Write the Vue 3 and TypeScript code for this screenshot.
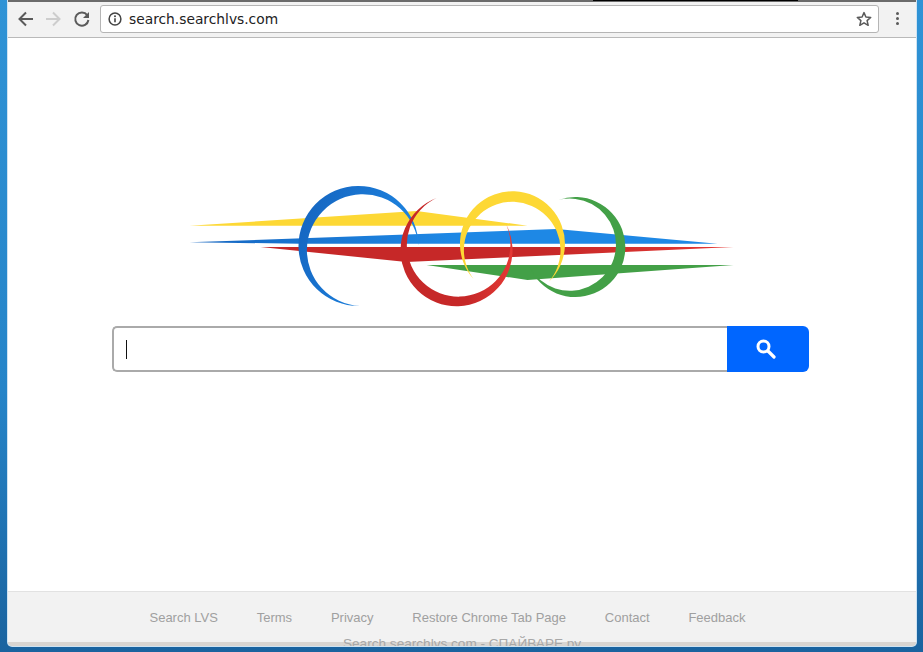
<script setup lang="ts">
const footerLinks: string[] = ['Search LVS', 'Terms', 'Privacy', 'Restore Chrome Tab Page', 'Contact', 'Feedback']
</script>

<template>
  <div class="desktop">
    <div class="window">
      <div class="topstrip"><span class="tabedge"></span></div>
      <header class="toolbar">
        <svg class="tool" width="18" height="18" viewBox="0 0 18 18">
          <path d="M16 9H3M9 2.500 2.500 9 9 15.500" fill="none" stroke="#5a5a5a" stroke-width="2" />
        </svg>
        <svg class="tool forward" width="18" height="18" viewBox="0 0 18 18">
          <path d="M2 9h13M9 2.500 15.500 9 9 15.500" fill="none" stroke="#cdcdcd" stroke-width="2" />
        </svg>
        <svg class="tool reload" width="18" height="18" viewBox="0 0 18 18">
          <path d="M14.200 5.200A6.600 6.600 0 1 0 15.400 10" fill="none" stroke="#5a5a5a" stroke-width="2" />
          <path d="M16 2v6h-6z" fill="#5a5a5a" />
        </svg>
        <div class="omnibox">
          <svg width="14" height="14" viewBox="0 0 14 14">
            <circle cx="7" cy="7" r="5.900" fill="none" stroke="#444" stroke-width="1.500" />
            <path d="M7 6.200v4" stroke="#444" stroke-width="1.600" />
            <circle cx="7" cy="4.200" r="1" fill="#444" />
          </svg>
          <span class="url">search.searchlvs.com</span>
          <svg class="star" width="16" height="16" viewBox="0 0 16 16">
            <path d="M8 1.600 9.900 6l4.800.4-3.600 3.200 1.100 4.700L8 11.800l-4.200 2.500 1.100-4.700-3.600-3.200L6.100 6z" fill="none" stroke="#5a5a5a" stroke-width="1.500" stroke-linejoin="round" />
          </svg>
        </div>
        <div class="menu"><i></i><i></i><i></i></div>
      </header>

      <main class="page">
        <svg class="logo" width="560" height="130" viewBox="181.500 180 560 130">
          <defs>
            <linearGradient id="blueGrad" x1="0" x2="1" y1="0" y2="0">
              <stop offset="0" stop-color="#1565c0" />
              <stop offset="0.5" stop-color="#1e88e5" />
              <stop offset="1" stop-color="#1e88e5" />
            </linearGradient>
            <linearGradient id="redGrad" x1="0" x2="1" y1="0" y2="0">
              <stop offset="0" stop-color="#c62828" />
              <stop offset="0.6" stop-color="#c62828" />
              <stop offset="1" stop-color="#e53935" />
            </linearGradient>
            <linearGradient id="blueRing" x1="0" x2="1" y1="0.2" y2="0.6">
              <stop offset="0" stop-color="#1565c0" />
              <stop offset="1" stop-color="#1e88e5" />
            </linearGradient>
          </defs>
          <path d="M190 225.700 417 211 528 225.700z" fill="#fdd835" />
          <path d="M190 242.300 557 229 718 243.700H300z" fill="url(#blueGrad)" />
          <path d="M261 247H734L407 262z" fill="url(#redGrad)" />
          <path d="M427 265H734L528 280z" fill="#43a047" />
          <path d="M360 306A60 60 0 1 1 419 245.500A55.900 55.900 0 1 0 360 306z" fill="url(#blueRing)" />
          <path d="M474 279A52.500 52.500 0 1 1 549 282A48.300 48.300 0 1 0 474 279z" fill="#fdd835" />
          <path d="M559 200A50 50 0 1 1 530 267A46.100 46.100 0 1 0 559 200z" fill="#43a047" />
          <path d="M437 198A56 56 0 1 0 507 225A51.800 51.800 0 1 1 437 198z" fill="url(#redGrad)" />
        </svg>

        <form class="search" @submit.prevent>
          <div class="field"><span class="caret"></span></div>
          <button class="go" type="submit" aria-label="Search">
            <svg width="20" height="20" viewBox="0 0 20 20">
              <circle cx="7.500" cy="7.500" r="5.500" fill="none" stroke="#fff" stroke-width="3" />
              <path d="M12 12l6 6" stroke="#fff" stroke-width="3.200" stroke-linecap="round" />
            </svg>
          </button>
        </form>
      </main>

      <footer class="foot">
        <nav class="links">
          <a v-for="link in footerLinks" :key="link">{{ link }}</a>
        </nav>
        <p class="mark">Search.searchlvs.com - СПАЙВАРЕ.ру</p>
      </footer>
    </div>
  </div>
</template>

<style>
html,
body {
  margin: 0;
  overflow: hidden;
}
</style>

<style scoped>
.desktop {
  width: 923px;
  height: 652px;
  overflow: hidden;
  background: linear-gradient(180deg, #2f93d6 0%, #2584c8 60%, #1a639f 100%);
}

.window {
  display: flex;
  flex-direction: column;
  box-sizing: border-box;
  width: 908px;
  height: 646px;
  margin-left: 8px;
  overflow: hidden;
  border-radius: 0 0 4px 4px;
  background: #d9d5d1;
  box-shadow: 0 0 0 1px #cfe3f2;
}

.topstrip {
  position: relative;
  flex: none;
  height: 2px;
  background: #6b6b6b;
}

.tabedge {
  position: absolute;
  left: 585px;
  width: 205px;
  height: 1px;
  background: #000;
}

.toolbar {
  display: flex;
  flex: none;
  align-items: center;
  box-sizing: border-box;
  height: 36px;
  padding: 0 9px 2px 9px;
  background: #f2f2f2;
  border-bottom: 1px solid #b9b9b9;
}

.tool {
  flex: none;
}

.forward {
  margin-left: 9px;
}

.reload {
  margin-left: 11px;
}

.omnibox {
  display: flex;
  flex: none;
  align-items: center;
  box-sizing: border-box;
  width: 779px;
  height: 28px;
  margin-left: 9px;
  padding: 0 6px 0 7px;
  background: #fff;
  border: 1px solid #b5b5b5;
  border-radius: 3px;
}

.url {
  flex: 1;
  margin-left: 7px;
  color: #222;
  font: 13.800px "DejaVu Sans", sans-serif;
}

.star {
  flex: none;
}

.menu {
  display: flex;
  flex-direction: column;
  gap: 2px;
  margin-left: 17px;
}

.menu i {
  display: block;
  width: 3px;
  height: 3px;
  border-radius: 50%;
  background: #5a5a5a;
}

.page {
  display: flex;
  flex: none;
  flex-direction: column;
  align-items: center;
  box-sizing: border-box;
  height: 553px;
  padding: 142px 3px 0 0;
  background: #fff;
}

.logo {
  flex: none;
}

.search {
  display: flex;
  width: 697px;
  height: 46px;
  margin-top: 16px;
}

.field {
  display: flex;
  flex: 1;
  align-items: center;
  padding-left: 12px;
  background: #fff;
  border: 2px solid #aaa;
  border-right: 0;
  border-radius: 5px 0 0 5px;
}

.caret {
  display: block;
  width: 1px;
  height: 19px;
  background: #111;
}

.go {
  display: flex;
  align-items: center;
  justify-content: center;
  width: 82px;
  padding: 0 4px 0 0;
  background: #0066ff;
  border: 0;
  border-radius: 0 6px 6px 0;
}

.foot {
  flex: none;
  box-sizing: border-box;
  height: 51px;
  padding-top: 18px;
  background: #f2f2f2;
  border-top: 1px solid #e2e2e2;
  font-family: "Liberation Sans", Arial, sans-serif;
}

.links {
  display: flex;
  justify-content: center;
  gap: 38.800px;
  padding-right: 29px;
  color: #a0a0a0;
  font-size: 13px;
  line-height: 15px;
}

.mark {
  margin: 11px 0 0;
  color: #a8a8a8;
  font-size: 13.600px;
  line-height: 15px;
  text-align: center;
}
</style>
